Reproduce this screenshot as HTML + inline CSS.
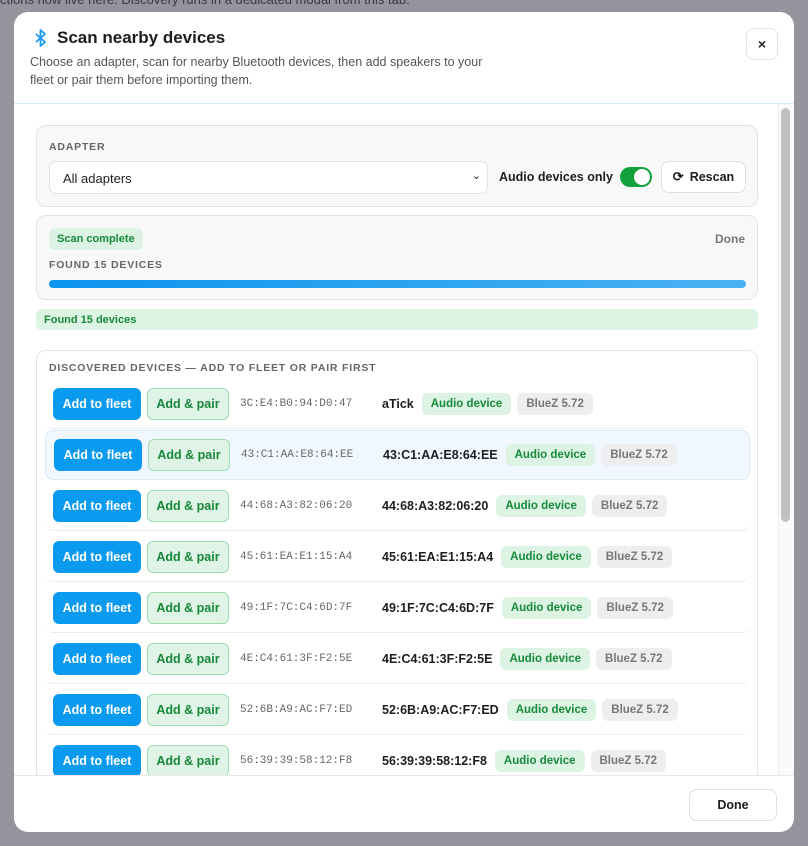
<!DOCTYPE html>
<html><head><meta charset="utf-8"><style>
*{box-sizing:border-box;margin:0;padding:0}
body{width:808px;height:846px;overflow:hidden;background:#94949d;font-family:"Liberation Sans",sans-serif;position:relative}
.bgtxt{position:absolute;color:#3a3a44;font-size:13px}
.modal{position:absolute;left:14px;top:12px;width:780px;height:820px;background:#fff;border-radius:14px;overflow:hidden}
.hdr{height:92px;border-bottom:1px solid #d6ecfa;padding:16px 20px}
.title{font-size:17px;font-weight:bold;color:#1d1d22;display:flex;align-items:center;gap:10px;margin-left:1px}
.sub{font-size:12.5px;color:#555;line-height:18px;margin-top:5px;width:465px;margin-left:-4px}
.close{position:absolute;right:16px;top:16px;width:32px;height:32px;border:1px solid #e0e0e4;border-radius:8px;display:flex;align-items:center;justify-content:center;font-size:14px;font-weight:bold;color:#222}
.body{position:absolute;top:92px;left:0;right:0;bottom:57px;overflow:hidden}
.track{position:absolute;right:0;top:0;width:16px;bottom:0;background:#fafafa;border-left:1px solid #eee}
.thumb{position:absolute;right:4px;top:4px;width:9px;height:414px;background:#c1c1c1;border-radius:5px}
.panel{position:absolute;left:22px;width:722px;background:#f8f8f9;border:1px solid #e3e3e8;border-radius:10px}
.lbl{font-size:10.5px;font-weight:bold;color:#666;letter-spacing:0.8px}
.sel{position:absolute;left:12px;top:35px;width:439px;height:33px;background:#fff;border:1px solid #e2e2e6;border-radius:7px;font-size:13px;color:#222;padding:9px 13px}
.pill{display:inline-block;background:#dcf3e3;color:#168a3a;font-weight:bold;border-radius:6px}
.foot{position:absolute;bottom:0;left:0;right:0;height:57px;border-top:1px solid #e8e8ec}
.btnw{position:absolute;border:1px solid #dedee3;border-radius:8px;background:#fff;font-size:12.5px;font-weight:bold;color:#1d1d22;display:flex;align-items:center;justify-content:center}
.list{position:absolute;left:22px;top:246px;width:722px;height:500px;border:1px solid #e3e3e8;border-radius:10px;background:#fff}
.row{position:absolute;left:8px;width:705px;height:50px;border-bottom:1px solid #ececf0;border-radius:8px;display:flex;align-items:center;padding-left:8px}
.row.hl{background:#f0f7fe;border:1px solid #dce9f5}
.bf{width:88px;height:32px;background:#0a9af0;color:#fff;border-radius:6px;font-size:12.5px;font-weight:bold;display:flex;align-items:center;justify-content:center}
.bp{width:82px;height:32px;background:#dff4e6;color:#17873a;border:1px solid #9fdcb2;border-radius:6px;font-size:12.5px;font-weight:bold;display:flex;align-items:center;justify-content:center;margin-left:6px}
.mac{font-family:"Liberation Mono",monospace;font-size:11px;color:#666;width:142px;margin-left:11px}
.nm{font-size:12.5px;font-weight:bold;color:#1d1d22;margin-right:8px}
.ad{background:#ddf3e4;color:#168a3a;font-size:11.5px;font-weight:bold;padding:5px 9px;border-radius:6px;margin-right:6px}
.bz{background:#eeeef1;color:#777;font-size:11.5px;font-weight:bold;padding:5px 9px;border-radius:6px}
</style></head><body>
<div class="bgtxt" style="left:0;top:-8px">ctions now live here. Discovery runs in a dedicated modal from this tab.</div>
<div class="modal">
 <div class="hdr">
  <div class="title"><svg width="12" height="18" viewBox="0 0 12 18"><path d="M1 5l9 8-4.5 4V1L10 5 1 13" fill="none" stroke="#1a9af0" stroke-width="1.8" stroke-linejoin="round"/></svg>Scan nearby devices</div>
  <div class="sub">Choose an adapter, scan for nearby Bluetooth devices, then add speakers to your fleet or pair them before importing them.</div>
 </div>
 <div class="close">×</div>
 <div class="body">
  <div class="panel" style="top:21px;height:82px">
   <div class="lbl" style="position:absolute;left:12px;top:15px">ADAPTER</div>
   <div class="sel">All adapters<span style="position:absolute;right:6px;top:7px;font-size:11px">⌄</span></div>
   <div style="position:absolute;left:462px;top:44px;font-size:12.5px;font-weight:bold;color:#1d1d22">Audio devices only</div>
   <div style="position:absolute;left:583px;top:41px;width:32px;height:20px;background:#12a03c;border-radius:10px"><div style="position:absolute;right:2px;top:2px;width:16px;height:16px;background:#fff;border-radius:50%"></div></div>
   <div class="btnw" style="left:624px;top:35px;width:85px;height:32px"><span style="font-size:13px;margin-right:6px">⟳</span>Rescan</div>
  </div>
  <div class="panel" style="top:111px;height:85px">
   <div class="pill" style="position:absolute;left:12px;top:12px;font-size:11px;padding:5px 8px">Scan complete</div>
   <div style="position:absolute;right:12px;top:16px;font-size:12px;font-weight:bold;color:#777">Done</div>
   <div class="lbl" style="position:absolute;left:12px;top:43px">FOUND 15 DEVICES</div>
   <div style="position:absolute;left:12px;top:64px;width:697px;height:8px;border-radius:4px;background:linear-gradient(90deg,#0c94ee,#4ab2f2)"></div>
  </div>
  <div style="position:absolute;left:22px;top:205px;width:722px;height:21px;background:#ddf3e3;border-radius:6px;font-size:11px;font-weight:bold;color:#168a3a;padding:5px 8px">Found 15 devices</div>
  <div class="list">
   <div class="lbl" style="position:absolute;left:12px;top:11px">DISCOVERED DEVICES — ADD TO FLEET OR PAIR FIRST</div>
   <div class="row" style="top:28px"><div class="bf">Add to fleet</div><div class="bp">Add &amp; pair</div><div class="mac">3C:E4:B0:94:D0:47</div><div class="nm">aTick</div><span class="ad">Audio device</span><span class="bz">BlueZ 5.72</span></div>
   <div class="row hl" style="top:79px"><div class="bf">Add to fleet</div><div class="bp">Add &amp; pair</div><div class="mac">43:C1:AA:E8:64:EE</div><div class="nm">43:C1:AA:E8:64:EE</div><span class="ad">Audio device</span><span class="bz">BlueZ 5.72</span></div>
   <div class="row" style="top:130px"><div class="bf">Add to fleet</div><div class="bp">Add &amp; pair</div><div class="mac">44:68:A3:82:06:20</div><div class="nm">44:68:A3:82:06:20</div><span class="ad">Audio device</span><span class="bz">BlueZ 5.72</span></div>
   <div class="row" style="top:181px"><div class="bf">Add to fleet</div><div class="bp">Add &amp; pair</div><div class="mac">45:61:EA:E1:15:A4</div><div class="nm">45:61:EA:E1:15:A4</div><span class="ad">Audio device</span><span class="bz">BlueZ 5.72</span></div>
   <div class="row" style="top:232px"><div class="bf">Add to fleet</div><div class="bp">Add &amp; pair</div><div class="mac">49:1F:7C:C4:6D:7F</div><div class="nm">49:1F:7C:C4:6D:7F</div><span class="ad">Audio device</span><span class="bz">BlueZ 5.72</span></div>
   <div class="row" style="top:283px"><div class="bf">Add to fleet</div><div class="bp">Add &amp; pair</div><div class="mac">4E:C4:61:3F:F2:5E</div><div class="nm">4E:C4:61:3F:F2:5E</div><span class="ad">Audio device</span><span class="bz">BlueZ 5.72</span></div>
   <div class="row" style="top:334px"><div class="bf">Add to fleet</div><div class="bp">Add &amp; pair</div><div class="mac">52:6B:A9:AC:F7:ED</div><div class="nm">52:6B:A9:AC:F7:ED</div><span class="ad">Audio device</span><span class="bz">BlueZ 5.72</span></div>
   <div class="row" style="top:385px"><div class="bf">Add to fleet</div><div class="bp">Add &amp; pair</div><div class="mac">56:39:39:58:12:F8</div><div class="nm">56:39:39:58:12:F8</div><span class="ad">Audio device</span><span class="bz">BlueZ 5.72</span></div>
  </div>
  <div class="track"><div class="thumb"></div></div>
 </div>
 <div class="foot"><div class="btnw" style="right:17px;top:13px;width:88px;height:32px">Done</div></div>
</div>
</body></html>
